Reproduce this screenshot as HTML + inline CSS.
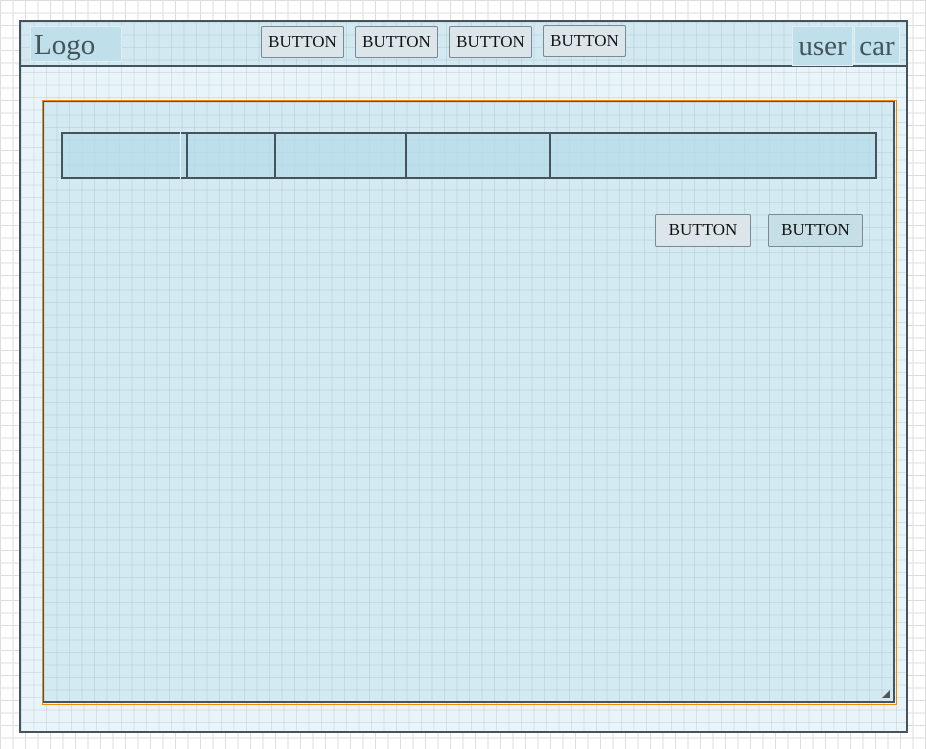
<!DOCTYPE html><html><head><style>
body{margin:0;width:926px;height:749px;overflow:hidden;position:relative;font-family:"Liberation Serif",serif;
background-color:#fff;background-image:linear-gradient(#ddd 1px,transparent 1px),linear-gradient(90deg,#ddd 1px,transparent 1px);background-size:12.5px 12.5px;}
.a{position:absolute;box-sizing:border-box}
.g{background-image:linear-gradient(rgba(150,170,180,.25) 1px,transparent 1px),linear-gradient(90deg,rgba(150,170,180,.25) 1px,transparent 1px);background-size:12.5px 12.5px}
.btn{position:absolute;box-sizing:border-box;border:1px solid #7a8a93;border-radius:2px;background:#dbe5ea;font-size:17px;color:#111;text-align:center;line-height:30px}
</style></head><body>
<div class="a g" style="left:19px;top:20px;width:889px;height:713px;border:2px solid #44535c;background-color:#e8f4fa"></div>
<div class="a g" style="left:19px;top:20px;width:889px;height:47px;border:2px solid #44535c;background-color:#d3e9f1"></div>
<div class="a" style="left:30px;top:26px;width:92px;height:36px;background:#bfe0ea;border:1px solid #e0eef3;font-size:29px;color:#44535c;padding-left:3px;line-height:36px">Logo</div>
<div class="a" style="left:792px;top:26px;width:61px;height:40px;background:#bfe0ea;border:1px solid #e0eef3;font-size:29px;color:#44535c;text-align:center;line-height:38px">user</div>
<div class="a" style="left:854px;top:26px;width:46px;height:38px;background:#bfe0ea;border:1px solid #e0eef3;font-size:29px;color:#44535c;text-align:center;line-height:38px">car</div>
<div class="btn" style="left:261px;top:26px;width:83px;height:32px">BUTTON</div>
<div class="btn" style="left:355px;top:26px;width:83px;height:32px">BUTTON</div>
<div class="btn" style="left:449px;top:26px;width:83px;height:32px">BUTTON</div>
<div class="btn" style="left:543px;top:25px;width:83px;height:32px">BUTTON</div>
<div class="a" style="left:42px;top:100px;width:855px;height:605px;border:1px solid #f08a00"></div>
<div class="a g" style="left:43px;top:101px;width:852px;height:602px;border:2px solid #44535c;border-left-width:1px;border-top-width:1px;background-color:#d4eaf2"></div>
<div class="a" style="left:61px;top:132px;width:816px;height:47px;border:2px solid #44535c;background:rgba(180,218,232,.7)"></div>
<div class="a" style="left:186px;top:132px;width:2px;height:47px;background:#44535c"></div>
<div class="a" style="left:180px;top:132px;width:1px;height:47px;background:#e8f4fa"></div>
<div class="a" style="left:274px;top:132px;width:2px;height:47px;background:#44535c"></div>
<div class="a" style="left:405px;top:132px;width:2px;height:47px;background:#44535c"></div>
<div class="a" style="left:549px;top:132px;width:2px;height:47px;background:#44535c"></div>
<div class="btn" style="left:655px;top:214px;width:96px;height:33px">BUTTON</div>
<div class="btn" style="left:768px;top:214px;width:95px;height:33px;background:#c6dee6">BUTTON</div>
<svg class="a" style="left:880px;top:688px" width="12" height="12"><path d="M2 10L10 2L10 10Z" fill="#555"/></svg>
</body></html>
